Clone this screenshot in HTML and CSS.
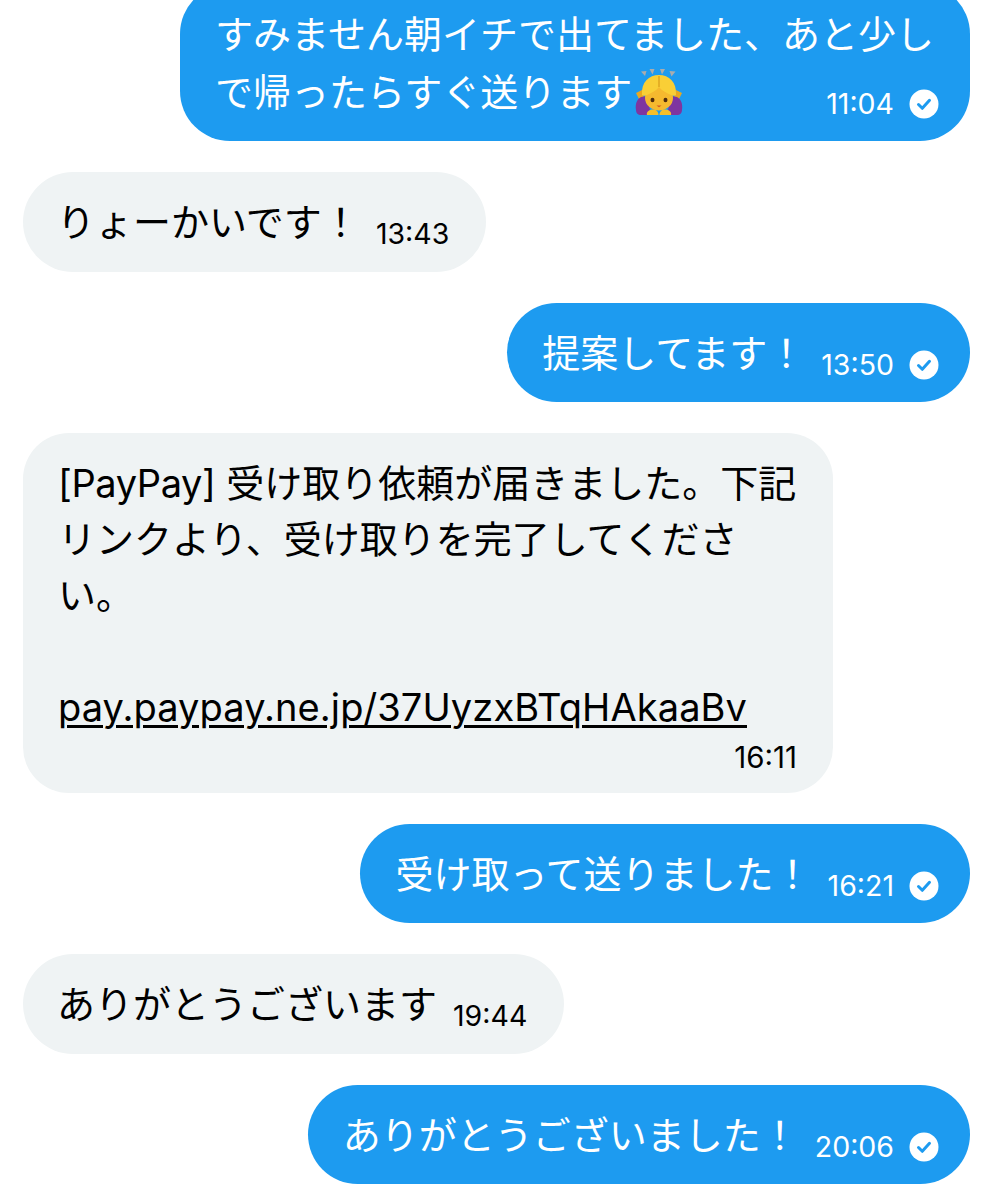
FILE: index.html
```html
<!DOCTYPE html>
<html lang="ja">
<head>
<meta charset="utf-8">
<title>Messages</title>
<link rel="stylesheet" href="styles.css">
</head>
<body>
<main class="chat">
  <div class="bubble sent first">
    <span class="text">すみません朝イチで出てました、あと少し<br>で帰ったらすぐ送ります<svg class="emoji" viewBox="0 0 48 48" aria-hidden="true"><g fill="#a9acae"><path d="M6 3.500l5.500-.5-1.500 5z"/><path d="M14.500 1l5 0-2 5.500z"/><path d="M25 1l5 0-3 5.500z"/><path d="M34.500 3l6 .5-4 5z"/></g><path d="M1 25l6-3 2 8-5 1zM47 25l-6-3-2 8 5 1z" fill="#e9a81f"/><path d="M1 42c-1-6 1-11 5-13l6-1 3 14-3 5H6c-3 0-5-2-5-5zM47 42c1-6-1-11-5-13l-6-1-3 14 3 5h6c3 0 5-2 5-5z" fill="#7e35a0"/><ellipse cx="24" cy="30" rx="14" ry="12.500" fill="#f5b92f"/><path d="M7 27c-1-13 7-20 17-20s18 7 17 20c-1 1-3 1-5 0-4-2-9-4-12-8-3 4-8 6-12 8-2 1-4 1-5 0z" fill="#f9cf36"/><path d="M24 8v11" stroke="#d79a1c" stroke-width="1.200" fill="none"/><ellipse cx="17.500" cy="32" rx="2" ry="2.200" fill="#4f2c0e"/><ellipse cx="30.500" cy="32" rx="2" ry="2.200" fill="#4f2c0e"/><path d="M21.500 37.500h5l-2.500 1.800z" fill="#d2541e"/><path d="M12 47c-1-3 2-5.500 6-5.500 3 0 5.500 2 5.500 5.500zM36 47c1-3-2-5.500-6-5.500-3 0-5.500 2-5.500 5.500z" fill="#f6bf2a"/></svg></span>
    <span class="meta wide"><time class="time">11:04</time><svg class="check" viewBox="0 0 30 30" aria-hidden="true"><circle cx="15" cy="15" r="14.500" fill="#fff"/><path d="M9.500 15.500l3.800 3.800 7.200-8" fill="none" stroke="#1d9bf0" stroke-width="3" stroke-linecap="round" stroke-linejoin="round"/></svg></span>
  </div>
  <div class="bubble received"><span class="text">りょーかいです！</span><span class="meta"><time class="time">13:43</time></span></div>
  <div class="bubble sent"><span class="text">提案してます！</span><span class="meta"><time class="time">13:50</time><svg class="check" viewBox="0 0 30 30" aria-hidden="true"><circle cx="15" cy="15" r="14.500" fill="#fff"/><path d="M9.500 15.500l3.800 3.800 7.200-8" fill="none" stroke="#1d9bf0" stroke-width="3" stroke-linecap="round" stroke-linejoin="round"/></svg></span></div>
  <div class="bubble received long">
    <p class="text"><span class="tag">[PayPay]</span> 受け取り依頼が届きました。下記<br>リンクより、受け取りを完了してくださ<br>い。<br><br><a class="link" href="#">pay.paypay.ne.jp/37UyzxBTqHAkaaBv</a></p>
    <div class="stamp"><time class="time">16:11</time></div>
  </div>
  <div class="bubble sent"><span class="text">受け取って送りました！</span><span class="meta"><time class="time">16:21</time><svg class="check" viewBox="0 0 30 30" aria-hidden="true"><circle cx="15" cy="15" r="14.500" fill="#fff"/><path d="M9.500 15.500l3.800 3.800 7.200-8" fill="none" stroke="#1d9bf0" stroke-width="3" stroke-linecap="round" stroke-linejoin="round"/></svg></span></div>
  <div class="bubble received"><span class="text">ありがとうございます</span><span class="meta"><time class="time">19:44</time></span></div>
  <div class="bubble sent"><span class="text">ありがとうございました！</span><span class="meta"><time class="time">20:06</time><svg class="check" viewBox="0 0 30 30" aria-hidden="true"><circle cx="15" cy="15" r="14.500" fill="#fff"/><path d="M9.500 15.500l3.800 3.800 7.200-8" fill="none" stroke="#1d9bf0" stroke-width="3" stroke-linecap="round" stroke-linejoin="round"/></svg></span></div>
</main>
</body>
</html>
```
FILE: styles.css
```css
html, body { margin: 0; padding: 0; background: #fff; }
body { height: 1200px; overflow: hidden; font-family: Inter, "Noto Sans CJK JP", sans-serif; }
.chat { display: flex; flex-direction: column; gap: 31px; margin-top: -16px; padding: 0 23px; }
.bubble { box-sizing: border-box; width: fit-content; padding: 21px 37px 20.500px 34px; border-radius: 50px; font-size: 38px; line-height: 58px; white-space: nowrap; display: flex; align-items: flex-start; }
.sent { align-self: flex-end; background: #1d9bf0; color: #fff; padding-left: 35px; padding-right: 31px; }
.received { align-self: flex-start; background: #eff3f4; color: #000; }
.first { position: relative; height: 157px; padding-right: 36px; }
.long { display: block; width: 810px; padding: 22px 36px 22.500px 35px; border-radius: 46px; line-height: 56px; }
.text { margin: 0; }
.tag { letter-spacing: -0.4px; }
.link { color: #000; letter-spacing: 0.1px; text-decoration: underline; text-decoration-thickness: 2.500px; text-underline-offset: 4px; }
.meta { box-sizing: border-box; display: flex; align-items: center; gap: 15px; margin-left: 16px; height: 58px; padding-top: 24px; }
.wide { position: absolute; right: 31px; bottom: 20px; margin: 0; }
.time { font-family: Inter, sans-serif; font-size: 28.500px; line-height: 34px; }
.check { width: 30px; height: 30px; display: block; }
.emoji { width: 48px; height: 48px; margin-left: 3px; vertical-align: -10px; }
.stamp { text-align: right; height: 32px; line-height: 32px; margin-top: 3px; }
.stamp .time { font-size: 29.500px; line-height: 32px; }
```
